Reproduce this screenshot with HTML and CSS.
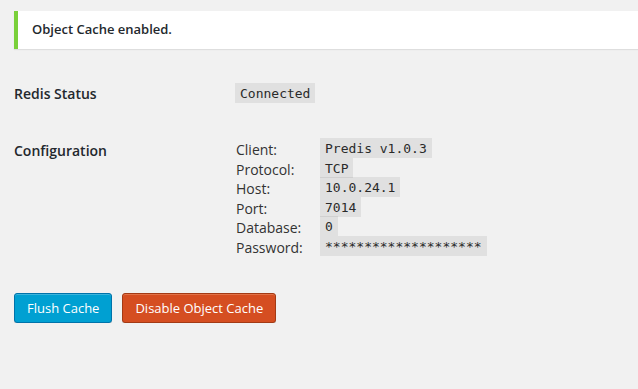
FILE: index.html
```html
<!DOCTYPE html>
<html>
<head>
<meta charset="utf-8">
<link rel="stylesheet" href="styles.css">
</head>
<body>
<div class="wrap">
  <div class="notice"><p>Object Cache enabled.</p></div>

  <div class="form-table">
    <div class="row row-status">
      <div class="th">Redis Status</div>
      <div class="td"><code>Connected</code></div>
    </div>
    <div class="row row-config">
      <div class="th">Configuration</div>
      <div class="td">
        <div class="config">
          <span class="key">Client:</span><span class="val"><code>Predis v1.0.3</code></span>
          <span class="key">Protocol:</span><span class="val"><code>TCP</code></span>
          <span class="key">Host:</span><span class="val"><code>10.0.24.1</code></span>
          <span class="key">Port:</span><span class="val"><code>7014</code></span>
          <span class="key">Database:</span><span class="val"><code>0</code></span>
          <span class="key">Password:</span><span class="val"><code>********************</code></span>
        </div>
      </div>
    </div>
  </div>

  <div class="actions">
    <a class="button button-primary">Flush Cache</a>
    <a class="button button-danger">Disable Object Cache</a>
  </div>
</div>
</body>
</html>
```

FILE: styles.css
```css
html, body {
  margin: 0;
  padding: 0;
  background: #f1f1f1;
}
body {
  font-family: "Open Sans", "Liberation Sans", sans-serif;
  font-size: 13px;
  line-height: 19.5px;
  color: #444;
}
.wrap {
  padding: 11px 0 0 14px;
}
.notice {
  background: #fff;
  border-left: 4px solid #7ad03a;
  box-shadow: 0 1px 1px rgba(0, 0, 0, 0.08);
  padding: 1px 12px;
}
.notice p {
  margin: 6px 0;
  padding: 2px 0 2px 2px;
  font-weight: 600;
  color: #23282d;
}
.form-table {
  margin-top: 35.5px;
  display: flex;
  flex-direction: column;
  gap: 35.5px;
}
.row {
  display: flex;
}
.th {
  width: 221px;
  flex: none;
  font-size: 14px;
  font-weight: 600;
  color: #23282d;
}
.row-config .th {
  padding-top: 2px;
}
.td {
  flex: 1;
}
code {
  font-family: "DejaVu Sans Mono", monospace;
  font-size: 13px;
  background: rgba(0, 0, 0, 0.07);
  padding: 3px 5px 2px;
  color: #2a2a2a;
}
.config {
  display: grid;
  grid-template-columns: 85px auto;
  grid-auto-rows: 19.5px;
  justify-items: start;
  align-items: start;
}
.key {
  padding-left: 1px;
  padding-top: 1px;
  font-size: 14px;
  line-height: 19.5px;
  height: 19.5px;
  box-sizing: border-box;
  color: #333;
}
.val {
  line-height: 19.5px;
  height: 19.5px;
}
.actions {
  margin-top: 37px;
  display: flex;
  gap: 10px;
}
.button {
  display: inline-block;
  box-sizing: border-box;
  height: 30px;
  line-height: 28px;
  padding: 0 12px 2px;
  border: 1px solid;
  border-radius: 3px;
  font-size: 13px;
  font-weight: 500;
  color: #fff;
  text-decoration: none;
}
.button-primary {
  background: #00a0d2;
  border-color: #0073aa;
  box-shadow: inset 0 1px 0 rgba(120, 200, 230, 0.5), 0 1px 0 rgba(0, 0, 0, 0.15);
}
.button-danger {
  background: #d54e21;
  border-color: #a33a15;
  box-shadow: inset 0 1px 0 rgba(240, 150, 110, 0.5), 0 1px 0 rgba(0, 0, 0, 0.15);
}
```
